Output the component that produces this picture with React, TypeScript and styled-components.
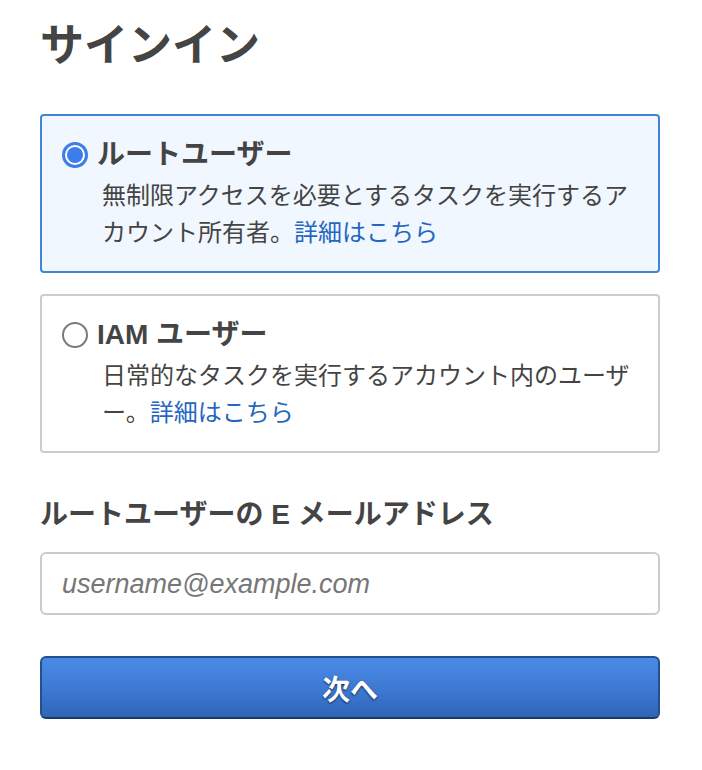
import React from "react";
import styled, { createGlobalStyle } from "styled-components";

const GlobalStyle = createGlobalStyle`
  html, body { margin: 0; padding: 0; background: #ffffff; }
  body {
    font-family: "Liberation Sans", "Noto Sans CJK JP", sans-serif;
    color: #444444;
  }
  * { box-sizing: border-box; }
`;

const Page = styled.main`
  width: 702px;
  padding: 20px 42px 40px 40px;
  display: flex;
  flex-direction: column;
`;

const Title = styled.h1`
  margin: 0;
  font-size: 44px;
  line-height: 52px;
  font-weight: 700;
  color: #444444;
`;

const Options = styled.div`
  margin-top: 42px;
  display: flex;
  flex-direction: column;
  gap: 21px;
`;

const Card = styled.label<{ $selected?: boolean }>`
  display: block;
  border: 2px solid ${(p) => (p.$selected ? "#4384d6" : "#cccccc")};
  background: ${(p) => (p.$selected ? "#f1f7fe" : "#ffffff")};
  border-radius: 4px;
  padding: 19px 20px 20px 20px;
  cursor: pointer;
`;

const Head = styled.div`
  display: flex;
  align-items: center;
  gap: 9px;
  height: 40px;
`;

const Radio = styled.span<{ $checked?: boolean }>`
  flex: none;
  width: 26px;
  height: 26px;
  border-radius: 50%;
  border: ${(p) => (p.$checked ? "3px solid #3b7ded" : "2px solid #7a7a7a")};
  background: #ffffff;
  display: flex;
  align-items: center;
  justify-content: center;
  &::after {
    content: "";
    display: ${(p) => (p.$checked ? "block" : "none")};
    width: 16px;
    height: 16px;
    border-radius: 50%;
    background: #3b7ded;
  }
`;

const OptionTitle = styled.span`
  font-size: 28px;
  line-height: 40px;
  font-weight: 700;
  color: #444444;
`;

const Desc = styled.p`
  margin: 2px 0 0 0;
  padding-left: 40px;
  font-size: 24px;
  line-height: 37px;
  color: #444444;
  line-break: loose;
`;

const Link = styled.a`
  color: #2466c0;
  text-decoration: none;
`;

const FieldLabel = styled.div`
  margin-top: 42px;
  font-size: 28px;
  line-height: 40px;
  font-weight: 700;
  color: #444444;
`;

const Input = styled.input`
  margin-top: 17px;
  width: 620px;
  height: 63px;
  border: 2px solid #cbcbcb;
  border-radius: 6px;
  padding: 2px 20px 0 20px;
  font-family: "Liberation Sans", "Noto Sans CJK JP", sans-serif;
  font-size: 27px;
  color: #444444;
  outline: none;
  &::placeholder {
    color: #777777;
    font-style: italic;
  }
`;

const Button = styled.button`
  margin-top: 41px;
  width: 620px;
  height: 63px;
  border: 2px solid #24508f;
  border-bottom-color: #1b3a6a;
  border-radius: 6px;
  background: linear-gradient(to bottom, #4a8be6 0%, #3e7ad4 50%, #2f65b8 100%);
  color: #ffffff;
  font-family: "Liberation Sans", "Noto Sans CJK JP", sans-serif;
  font-size: 28px;
  font-weight: 700;
  text-shadow: 0 1px 2px rgba(0, 0, 0, 0.7);
  cursor: pointer;
`;

export default function App() {
  return (
    <>
      <GlobalStyle />
      <Page>
        <Title>サインイン</Title>
        <Options>
          <Card $selected>
            <Head>
              <Radio $checked />
              <OptionTitle>ルートユーザー</OptionTitle>
            </Head>
            <Desc>
              無制限アクセスを必要とするタスクを実行するアカウント所有者。
              <Link href="#">詳細はこちら</Link>
            </Desc>
          </Card>
          <Card>
            <Head>
              <Radio />
              <OptionTitle>IAM ユーザー</OptionTitle>
            </Head>
            <Desc>
              日常的なタスクを実行するアカウント内のユーザー。
              <Link href="#">詳細はこちら</Link>
            </Desc>
          </Card>
        </Options>
        <FieldLabel>ルートユーザーの E メールアドレス</FieldLabel>
        <Input type="email" placeholder="username@example.com" />
        <Button type="button">次へ</Button>
      </Page>
    </>
  );
}
